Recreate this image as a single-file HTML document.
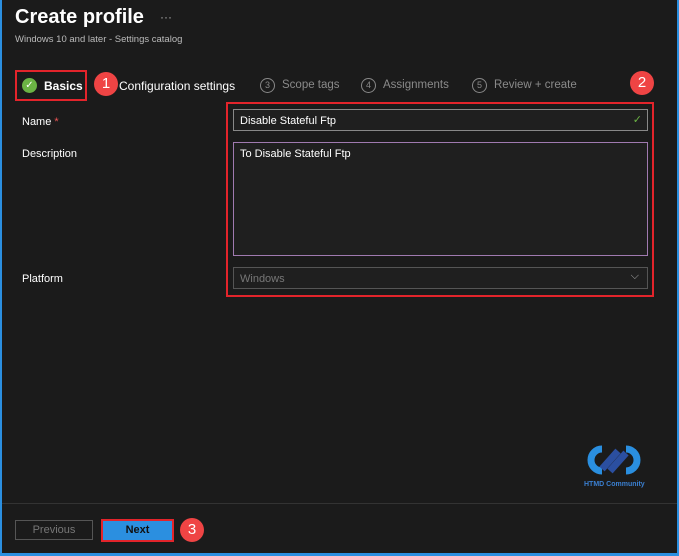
<!DOCTYPE html><html><head><style>
body{margin:0;width:679px;height:556px;overflow:hidden;background:#2b8fe0;font-family:"Liberation Sans",sans-serif;}
#f{position:absolute;left:2px;top:0;width:675px;height:553px;background:#1b1b1b;color:#fff;}
.a{position:absolute;}
.red{border:2px solid #e3242b;box-sizing:border-box;}
.num{position:absolute;width:24px;height:24px;border-radius:50%;background:#ef4444;color:#fff;font-size:15px;text-align:center;line-height:24px;}
.c{position:absolute;width:13px;height:13px;border:1px solid #888;border-radius:50%;font-size:9px;text-align:center;line-height:13px;color:#888;}
.t{color:#8a8a8a;font-size:11.5px;}
.in{position:absolute;background:#1f1f1f;border:1px solid #888;box-sizing:border-box;font-size:11px;color:#fff;padding:5px 6px;}
</style></head><body><div id="f">
<div class="a" style="left:13px;top:6px;font-size:20px;font-weight:bold">Create profile</div>
<div class="a" style="left:158px;top:10px;color:#aaa;font-size:12px">···</div>
<div class="a" style="left:13px;top:34px;font-size:9.5px;color:#bbb">Windows 10 and later - Settings catalog</div>
<div class="a red" style="left:13px;top:70px;width:72px;height:31px"></div>
<div class="a" style="left:20px;top:78px;width:15px;height:15px;border-radius:50%;background:#6bb344;color:#fff;font-size:10px;text-align:center;line-height:15px">✓</div>
<div class="a" style="left:42px;top:79px;font-size:12px;font-weight:bold">Basics</div>
<div class="num" style="left:92px;top:72px">1</div>
<div class="a" style="left:117px;top:79px;font-size:12px">Configuration settings</div>
<div class="c" style="left:258px;top:78px">3</div><div class="a t" style="left:280px;top:79px">Scope tags</div>
<div class="c" style="left:359px;top:78px">4</div><div class="a t" style="left:381px;top:79px">Assignments</div>
<div class="c" style="left:470px;top:78px">5</div><div class="a t" style="left:492px;top:79px">Review + create</div>
<div class="num" style="left:628px;top:71px">2</div>
<div class="a red" style="left:224px;top:102px;width:428px;height:195px"></div>
<div class="a" style="left:20px;top:116px;font-size:11px">Name <span style="color:#e55">*</span></div>
<div class="in" style="left:231px;top:109px;width:415px;height:22px">Disable Stateful Ftp<span style="position:absolute;right:5px;top:3px;color:#6bb344">✓</span></div>
<div class="a" style="left:20px;top:148px;font-size:11px">Description</div>
<div class="in" style="left:231px;top:142px;width:415px;height:114px;border-color:#a07ab0">To Disable Stateful Ftp</div>
<div class="a" style="left:20px;top:273px;font-size:11px">Platform</div>
<div class="in" style="left:231px;top:267px;width:415px;height:22px;color:#777;border-color:#555">Windows<span style="position:absolute;right:8px;top:2px;color:#aaa">⌵</span></div>
<svg class="a" style="left:580px;top:443px" width="66" height="34" viewBox="0 0 66 34"><path d="M20 6a11 11 0 1 0 0 22" stroke="#2a8fe0" stroke-width="7" fill="none"/><path d="M44 6a11 11 0 1 1 0 22" stroke="#2a8fe0" stroke-width="7" fill="none"/><path d="M20 26L36 8M28 28L44 10" stroke="#2b4fa0" stroke-width="7"/></svg>
<div class="a" style="left:582px;top:481px;font-size:7px;font-weight:bold;color:#3a7fd0">HTMD Community</div>
<div class="a" style="left:0;top:503px;width:675px;height:1px;background:#333"></div>
<div class="a" style="left:13px;top:520px;width:78px;height:20px;border:1px solid #555;box-sizing:border-box;color:#777;font-size:11px;text-align:center;line-height:18px">Previous</div>
<div class="a red" style="left:99px;top:519px;width:73px;height:23px;background:#2b8fe0;color:#111;font-size:11px;font-weight:bold;text-align:center;line-height:19px">Next</div>
<div class="num" style="left:178px;top:518px">3</div>
</div></body></html>
